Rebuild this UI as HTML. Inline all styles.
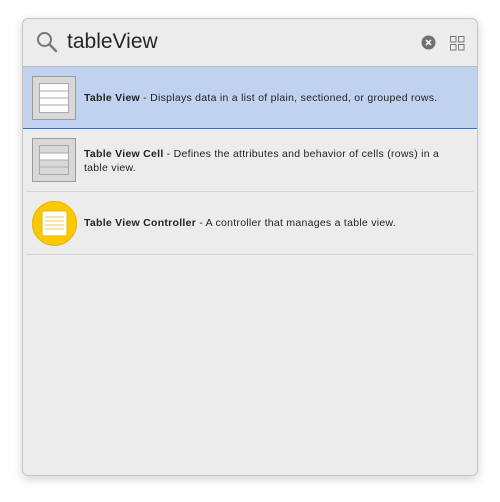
<!DOCTYPE html>
<html><head><style>
body{margin:0;width:500px;height:502px;background:#fff;font-family:"Liberation Sans",sans-serif;position:relative;overflow:hidden}
.panel{position:absolute;left:22px;top:18px;width:454px;height:456px;background:#ececec;border:1px solid #c6c6c6;border-radius:6px;box-shadow:0 3px 10px rgba(0,0,0,.18);overflow:hidden}
.search{position:absolute;left:0;top:0;width:454px;height:47px;border-bottom:1px solid #b9b9b9}
.q{position:absolute;left:44px;top:11px;font-size:21px;color:#262626}
.row{position:absolute;left:0;width:454px;height:62px}
.t{position:absolute;left:61px;font-size:10.5px;color:#222;line-height:14px;width:362px;letter-spacing:0.27px}
.t b{font-weight:bold}
.sep{position:absolute;left:4px;width:446px;height:1px;background:#d3d3d3}
</style></head><body>
<div class="panel">
<div class="search">
<svg style="position:absolute;left:13px;top:12px" width="22" height="22"><circle cx="8.5" cy="8.5" r="6.5" fill="none" stroke="#777" stroke-width="2"/><line x1="13.5" y1="13.5" x2="20" y2="20" stroke="#777" stroke-width="2.4" stroke-linecap="round"/></svg>
<div class="q">tableView</div>
<svg style="position:absolute;left:398px;top:16px" width="15" height="15"><circle cx="7.5" cy="7.5" r="7" fill="#707070"/><path d="M5 5L10 10M10 5L5 10" stroke="#ececec" stroke-width="1.8"/></svg>
<svg style="position:absolute;left:427px;top:17px" width="15" height="15" fill="none" stroke="#777" stroke-width="1"><rect x="0.5" y="0.5" width="5.5" height="5.5"/><rect x="8.5" y="0.5" width="5.5" height="5.5"/><rect x="0.5" y="8.5" width="5.5" height="5.5"/><rect x="8.5" y="8.5" width="5.5" height="5.5"/></svg>
</div>
<div class="row" style="top:48px;background:#c0d2ee;border-bottom:1px solid #2f6fe0;height:61px">
<svg style="position:absolute;left:9px;top:9px" width="44" height="44"><rect x="0.5" y="0.5" width="43" height="43" fill="#d8d8d8" stroke="#9a9a9a"/><rect x="7.5" y="7.5" width="29" height="29" fill="#fff" stroke="#aaa"/><path d="M8 15H36M8 22H36M8 29H36" stroke="#aaa"/></svg>
<div class="t" style="top:24px;width:400px"><b>Table View</b> - Displays data in a list of plain, sectioned, or grouped rows.</div>
</div>
<div class="row" style="top:110px">
<svg style="position:absolute;left:9px;top:9px" width="44" height="44"><rect x="0.5" y="0.5" width="43" height="43" fill="#d8d8d8" stroke="#9a9a9a"/><rect x="7.5" y="7.5" width="29" height="29" fill="#d8d8d8" stroke="#aaa"/><rect x="8" y="15" width="28" height="7" fill="#fff"/><path d="M8 15H36M8 22H36M8 29H36" stroke="#aaa"/></svg>
<div class="t" style="top:18px"><b>Table View Cell</b> - Defines the attributes and behavior of cells (rows) in a table view.</div>
</div>
<div class="sep" style="top:172px"></div>
<div class="row" style="top:173px">
<svg style="position:absolute;left:9px;top:9px" width="45" height="45"><circle cx="22.5" cy="22.5" r="22" fill="#fcc800" stroke="#e8b400"/><rect x="10" y="10" width="25" height="25" rx="2" fill="#fff" stroke="#e8b400"/><path d="M13 16H32M13 20H32M13 24H32M13 28H32" stroke="#f3c84a"/></svg>
<div class="t" style="top:24px;width:400px"><b>Table View Controller</b> - A controller that manages a table view.</div>
</div>
<div class="sep" style="top:235px"></div>
</div>
</body></html>
